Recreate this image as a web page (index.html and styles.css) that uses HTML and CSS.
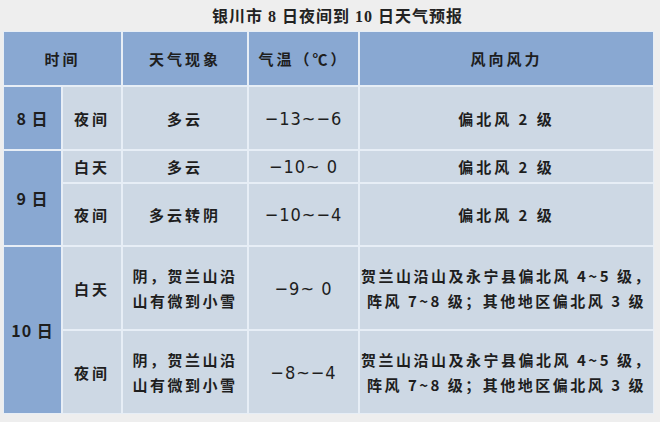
FILE: index.html
```html
<!DOCTYPE html>
<html lang="zh">
<head>
<meta charset="utf-8">
<link rel="stylesheet" href="styles.css">
</head>
<body>
<div class="page">
  <h1 class="title">银川市 <span class="num">8</span> 日夜间到 <span class="num">10</span> 日天气预报</h1>
  <div class="grid">
    <div class="cell head c-time">时间</div>
    <div class="cell head">天气现象</div>
    <div class="cell head">气温（℃）</div>
    <div class="cell head">风向风力</div>

    <div class="cell date d8">8 日</div>
    <div class="cell">夜间</div>
    <div class="cell">多云</div>
    <div class="cell temp">−13~−6</div>
    <div class="cell">偏北风 2 级</div>

    <div class="cell date d9">9 日</div>
    <div class="cell">白天</div>
    <div class="cell">多云</div>
    <div class="cell temp">−10~ 0</div>
    <div class="cell">偏北风 2 级</div>
    <div class="cell">夜间</div>
    <div class="cell">多云转阴</div>
    <div class="cell temp">−10~−4</div>
    <div class="cell">偏北风 2 级</div>

    <div class="cell date d10">10 日</div>
    <div class="cell">白天</div>
    <div class="cell multi">阴，贺兰山沿<br>山有微到小雪</div>
    <div class="cell temp">−9~ 0</div>
    <div class="cell multi">贺兰山沿山及永宁县偏北风 4~5 级，<br>阵风 7~8 级；其他地区偏北风 3 级</div>
    <div class="cell">夜间</div>
    <div class="cell multi">阴，贺兰山沿<br>山有微到小雪</div>
    <div class="cell temp">−8~−4</div>
    <div class="cell multi">贺兰山沿山及永宁县偏北风 4~5 级，<br>阵风 7~8 级；其他地区偏北风 3 级</div>
  </div>
</div>
</body>
</html>
```

FILE: styles.css
```css
html, body {
  margin: 0;
  padding: 0;
  background: #eeeeee;
}
.page {
  width: 660px;
  height: 422px;
  padding: 0 0 0 3px;
  box-sizing: border-box;
  font-family: "Noto Sans CJK SC", sans-serif;
  color: #1e1e1e;
}
.title {
  margin: 0;
  height: 31px;
  line-height: 34px;
  font-family: "Liberation Serif", "Noto Sans CJK SC", serif;
  font-size: 16px;
  font-weight: 700;
  text-align: center;
  letter-spacing: 1px;
  color: #222;
  padding-left: 12px;
}
.grid {
  width: 651px;
  box-sizing: border-box;
  display: grid;
  grid-template-columns: 57px 58px 124px 109px 293px;
  grid-template-rows: 53px 62px 31px 61px 82px 82px;
  gap: 2px;
  padding: 1px;
  background: #e7eef6;
}
.cell {
  background: #cdd8e4;
  display: flex;
  align-items: center;
  justify-content: center;
  text-align: center;
  font-size: 15px;
  font-weight: 600;
  letter-spacing: 3px;
  line-height: 25px;
}
.head {
  background: #89a8d2;
}
.c-time {
  grid-column: span 2;
}
.date {
  background: #89a8d2;
  font-size: 16px;
  letter-spacing: 1px;
}
.d8 { grid-row: span 1; }
.d9 { grid-row: span 2; }
.d10 { grid-row: span 2; }
.temp {
  font-family: "DejaVu Sans Condensed", "DejaVu Sans", sans-serif;
  font-stretch: condensed;
  font-size: 18px;
  letter-spacing: 1px;
  font-weight: 400;
}
.multi {
  letter-spacing: 2.5px;
}
```
